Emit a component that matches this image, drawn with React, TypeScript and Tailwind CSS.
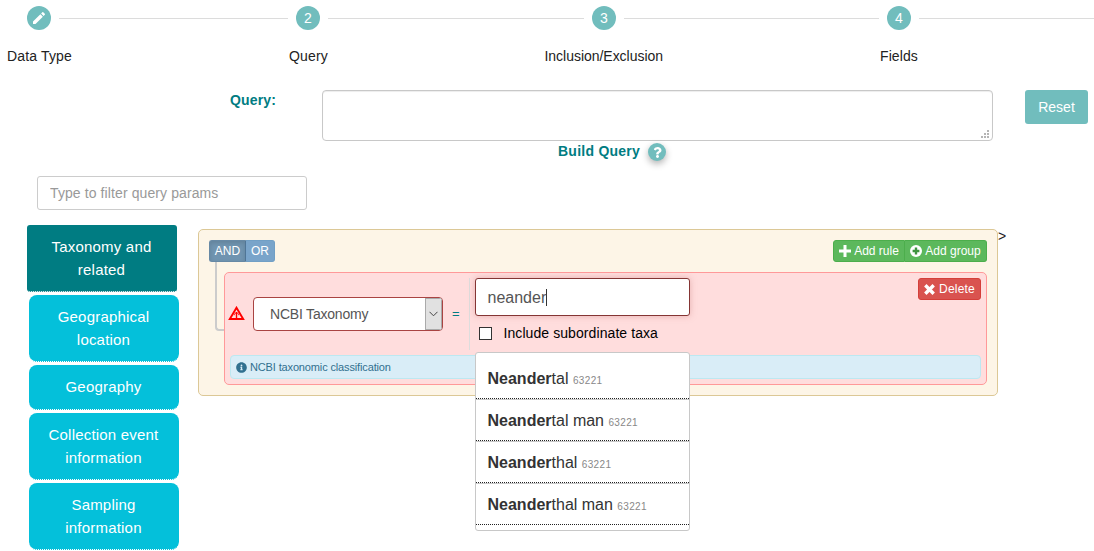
import type { ReactNode } from "react";
import { FaInfoCircle, FaQuestion } from "react-icons/fa";
import { MdEdit } from "react-icons/md";

const categories = [
  { lines: ["Geographical", "location"] },
  { lines: ["Geography"] },
  { lines: ["Collection event", "information"] },
  { lines: ["Sampling", "information"] },
];

const suggestions = ["tal", "tal man", "thal", "thal man"];

function Circle({ children }: { children: ReactNode }) {
  return (
    <div className="flex size-6 shrink-0 items-center justify-center rounded-full bg-[#71bdbd] text-[14px] leading-none text-white">
      {children}
    </div>
  );
}

function Line({ className }: { className: string }) {
  return <div className={`mx-2 h-px shrink-0 bg-[#dcdcdc] ${className}`} />;
}

function PlusIcon() {
  return (
    <svg className="mr-[3px] shrink-0" width="12" height="12" viewBox="0 0 12 12" fill="currentColor">
      <path d="M4.5 0h3v4.5H12v3H7.5V12h-3V7.5H0v-3h4.5Z" />
    </svg>
  );
}

function PlusCircleIcon() {
  return (
    <svg className="mr-[3px] shrink-0" width="12" height="12" viewBox="0 0 12 12">
      <circle cx="6" cy="6" r="6" fill="currentColor" />
      <path d="M4.8 2.6h2.4v2.2h2.2v2.4H7.2v2.2H4.8V7.2H2.6V4.8h2.2Z" fill="#3f9440" />
    </svg>
  );
}

function CrossIcon() {
  return (
    <svg className="mr-1 shrink-0" width="11" height="11" viewBox="0 0 11 11" stroke="currentColor" strokeWidth="3.4">
      <path d="m1.3 1.3 8.4 8.4M9.7 1.3 1.3 9.7" />
    </svg>
  );
}

function Stepper() {
  return (
    <header className="h-[90px] pt-1.5">
      <div className="flex items-center pl-[27px]">
        <Circle><MdEdit size={16} /></Circle>
        <Line className="w-[229px]" />
        <Circle>2</Circle>
        <Line className="w-[256px]" />
        <Circle>3</Circle>
        <Line className="w-[255px]" />
        <Circle>4</Circle>
        <Line className="w-[175px]" />
      </div>
      <div className="mt-4 flex pl-[7px] text-[14px] leading-5 text-[#222]">
        <span className="w-[282px] tracking-[0.15px]">Data Type</span>
        <span className="w-[255.5px] tracking-[0.15px]">Query</span>
        <span className="w-[335.5px] tracking-[-0.03px]">Inclusion/Exclusion</span>
        <span className="tracking-[0.1px]">Fields</span>
      </div>
    </header>
  );
}

function QueryRow() {
  return (
    <section className="flex h-[51px] items-start">
      <label className="w-[322px] pl-[230px] text-[14px] font-bold leading-5 tracking-[0.15px] text-[#007c82]">Query:</label>
      <div className="flex h-[51px] w-[671px] items-end justify-end rounded border border-[#c8c8c8] p-[3px] pb-0.5 shadow-[inset_0_1px_1px_rgba(0,0,0,0.075)]">
        <svg width="8" height="8" viewBox="0 0 8 8" fill="#b5b5b5" shapeRendering="crispEdges">
          <path d="M6 0h2v2H6zM3 3h2v2H3zM6 3h2v2H6zM0 6h2v2H0zM3 6h2v2H3zM6 6h2v2H6z" />
        </svg>
      </div>
      <button className="ml-8 h-[34px] w-[63px] rounded-[3px] bg-[#71bdbd] text-[14px] text-white">Reset</button>
    </section>
  );
}

function Sidebar() {
  return (
    <nav className="w-[198px] shrink-0 pl-[27px] text-center text-[15px] leading-[23px] tracking-[0.2px] text-white">
      <button className="mb-[3px] block w-[150px] rounded-[3px] border-b border-dotted border-white bg-[#007c82] py-2.5 pr-px">
        <span className="block">Taxonomy and</span>
        <span className="block">related</span>
      </button>
      {categories.map(({ lines }) => (
        <button key={lines[0]} className={`mb-[3px] ml-0.5 block w-[150px] rounded-lg border-b border-dotted border-white bg-[#04c0da] pr-px pt-2.5 last:mb-0 ${lines.length === 1 ? "pb-[11px]" : "pb-2.5"}`}>
          {lines.map((line) => <span key={line} className="block">{line}</span>)}
        </button>
      ))}
    </nav>
  );
}

function Suggestions() {
  return (
    <div className="absolute left-0 top-[74px] z-10 h-[179px] w-[215px] rounded-[3px] border border-[#c8c8c8] bg-white pt-[5px] text-[16px] leading-[22px] text-[#333]">
      {suggestions.map((rest, index) => (
        <div key={rest} className={index === 0 ? "h-[41px] border-b border-dotted border-[#222] pl-[11.5px] pt-[10px]" : "h-[42px] border-b border-t border-b-[#222] border-t-[#c8c8c8] pl-[11.5px] pt-[10px] [border-bottom-style:dotted]"}>
          <b>Neander</b>{rest} <span className="text-[10px] tracking-[0.35px] text-[#888]">63221</span>
        </div>
      ))}
    </div>
  );
}

function Rule() {
  return (
    <div className="ml-[15px] mt-2.5 h-[113px] w-[763px] rounded-[5px] border border-[#f99] bg-[#fdd] p-[5px]">
      <div className="flex h-[77px] items-start">
        <svg className="ml-[-2px] mt-[28px] shrink-0" width="17" height="15" viewBox="0 0 17 15" fill="none" stroke="#f00" strokeWidth="1.9">
          <path d="M8.5 1.7 15.2 13H1.8Z" />
          <path d="M8.5 6v7" strokeWidth="1.4" />
          <path d="M6.2 9.2c0-1.6 1-2.2 2.3-2.2s2.3.6 2.3 2.2" strokeWidth="1" />
        </svg>
        <div className="ml-2 mt-[19px] flex h-[34px] w-[190px] shrink-0 overflow-hidden rounded border border-[#a94442] bg-white text-[14px] leading-8 text-[#555]">
          <span className="flex-1 pl-4 tracking-[-0.2px]">NCBI Taxonomy</span>
          <span className="flex w-[17px] items-center justify-center border border-[#aaa] bg-[#e1e1e1]">
            <svg width="9" height="6" viewBox="0 0 9 6" fill="none" stroke="#444"><path d="m.5.8 4 4 4-4" /></svg>
          </span>
        </div>
        <span className="ml-[9px] mt-[27px] w-[17px] text-[13px] leading-[18px] text-[#007c82]">=</span>
        <div className="relative h-[72px] w-[221px] border-l border-[#ddd] pl-[5px]">
          <div className="flex h-[38px] w-[215px] items-center rounded-[3px] border border-[#843534] bg-white pl-[11.5px] text-[16px] text-[#555] shadow-[0_0_6px_#ce848380]">
            <span className="translate-y-px">neander</span><span className="h-[17px] w-px bg-[#333]" />
          </div>
          <label className="ml-[4px] mt-[7px] flex h-5 items-center text-[14px] tracking-[0.08px] text-black">
            <span className="mr-[11.5px] size-[13px] border border-[#333] bg-white" />
            Include subordinate taxa
          </label>
          <div className="absolute left-[5px] top-0"><Suggestions /></div>
        </div>
        <button className="ml-auto flex h-[22px] w-[63px] items-center justify-center rounded-[3px] border border-[#d43f3a] bg-[#d9534f] text-[12px] tracking-[0.2px] text-white">
          <CrossIcon />Delete
        </button>
      </div>
      <div className="flex h-6 items-center rounded-[4px] border border-[#bce8f1] bg-[#d9edf7] pl-[5px] text-[11px] text-[#31708f]">
        <FaInfoCircle size={11} className="mr-[3px]" />
        <span className="tracking-[-0.14px]">NCBI taxonomic classification</span>
      </div>
    </div>
  );
}

function Builder() {
  return (
    <div className="mt-1 flex h-[167px] items-start">
      <div className="relative h-[167px] w-[800px] rounded-[5px] border border-[#dcc896] bg-[#fdf5e7] p-2.5">
        <div className="absolute left-4 top-8 h-[69px] w-3 rounded-bl border-b-2 border-l-2 border-[#ccc]" />
        <div className="relative">
          <div className="flex h-[22px] justify-between text-[12px] leading-5 text-white">
            <div className="flex">
              <button className="w-[37px] rounded-l-[3px] border border-[#6789a5] border-r-[#4f7596] bg-[#7094b0] shadow-[inset_0_2px_4px_rgba(0,0,0,0.12)]">AND</button>
              <button className="w-[29px] rounded-r-[3px] border border-l-0 border-[#719fc5] bg-[#79a4ca]">OR</button>
            </div>
            <div className="flex">
              <button className="flex w-[72px] items-center justify-center rounded-l-[3px] border border-[#4cae4c] bg-[#5cb85c]"><PlusIcon />Add rule</button>
              <button className="flex w-[82px] items-center justify-center rounded-r-[3px] border border-l-0 border-[#4cae4c] bg-[#5cb85c]"><PlusCircleIcon />Add group</button>
            </div>
          </div>
          <Rule />
        </div>
      </div>
      <span className="text-[14px] leading-[14px] text-[#222]">&gt;</span>
    </div>
  );
}

export default function App() {
  return (
    <main className="h-[551px] w-[1094px] overflow-hidden bg-white font-['Liberation_Sans',Arial,sans-serif]">
      <Stepper />
      <QueryRow />
      <div className="flex h-[35px] pl-[558px] pt-0.5">
        <b className="text-[14px] leading-[17px] tracking-[0.25px] text-[#007c82]">Build Query</b>
        <span className="ml-2 flex size-[18px] items-center justify-center rounded-full bg-[#71bdbd] text-white shadow-[0_3px_7px_rgba(0,0,0,0.3)]"><FaQuestion size={11} /></span>
      </div>
      <input className="ml-[37px] block h-[34px] w-[270px] rounded-[3px] border border-[#ccc] px-3 text-[14px] tracking-[0.1px] placeholder:text-[#999]" placeholder="Type to filter query params" />
      <div className="mt-[15px] flex items-start">
        <Sidebar />
        <Builder />
      </div>
    </main>
  );
}
